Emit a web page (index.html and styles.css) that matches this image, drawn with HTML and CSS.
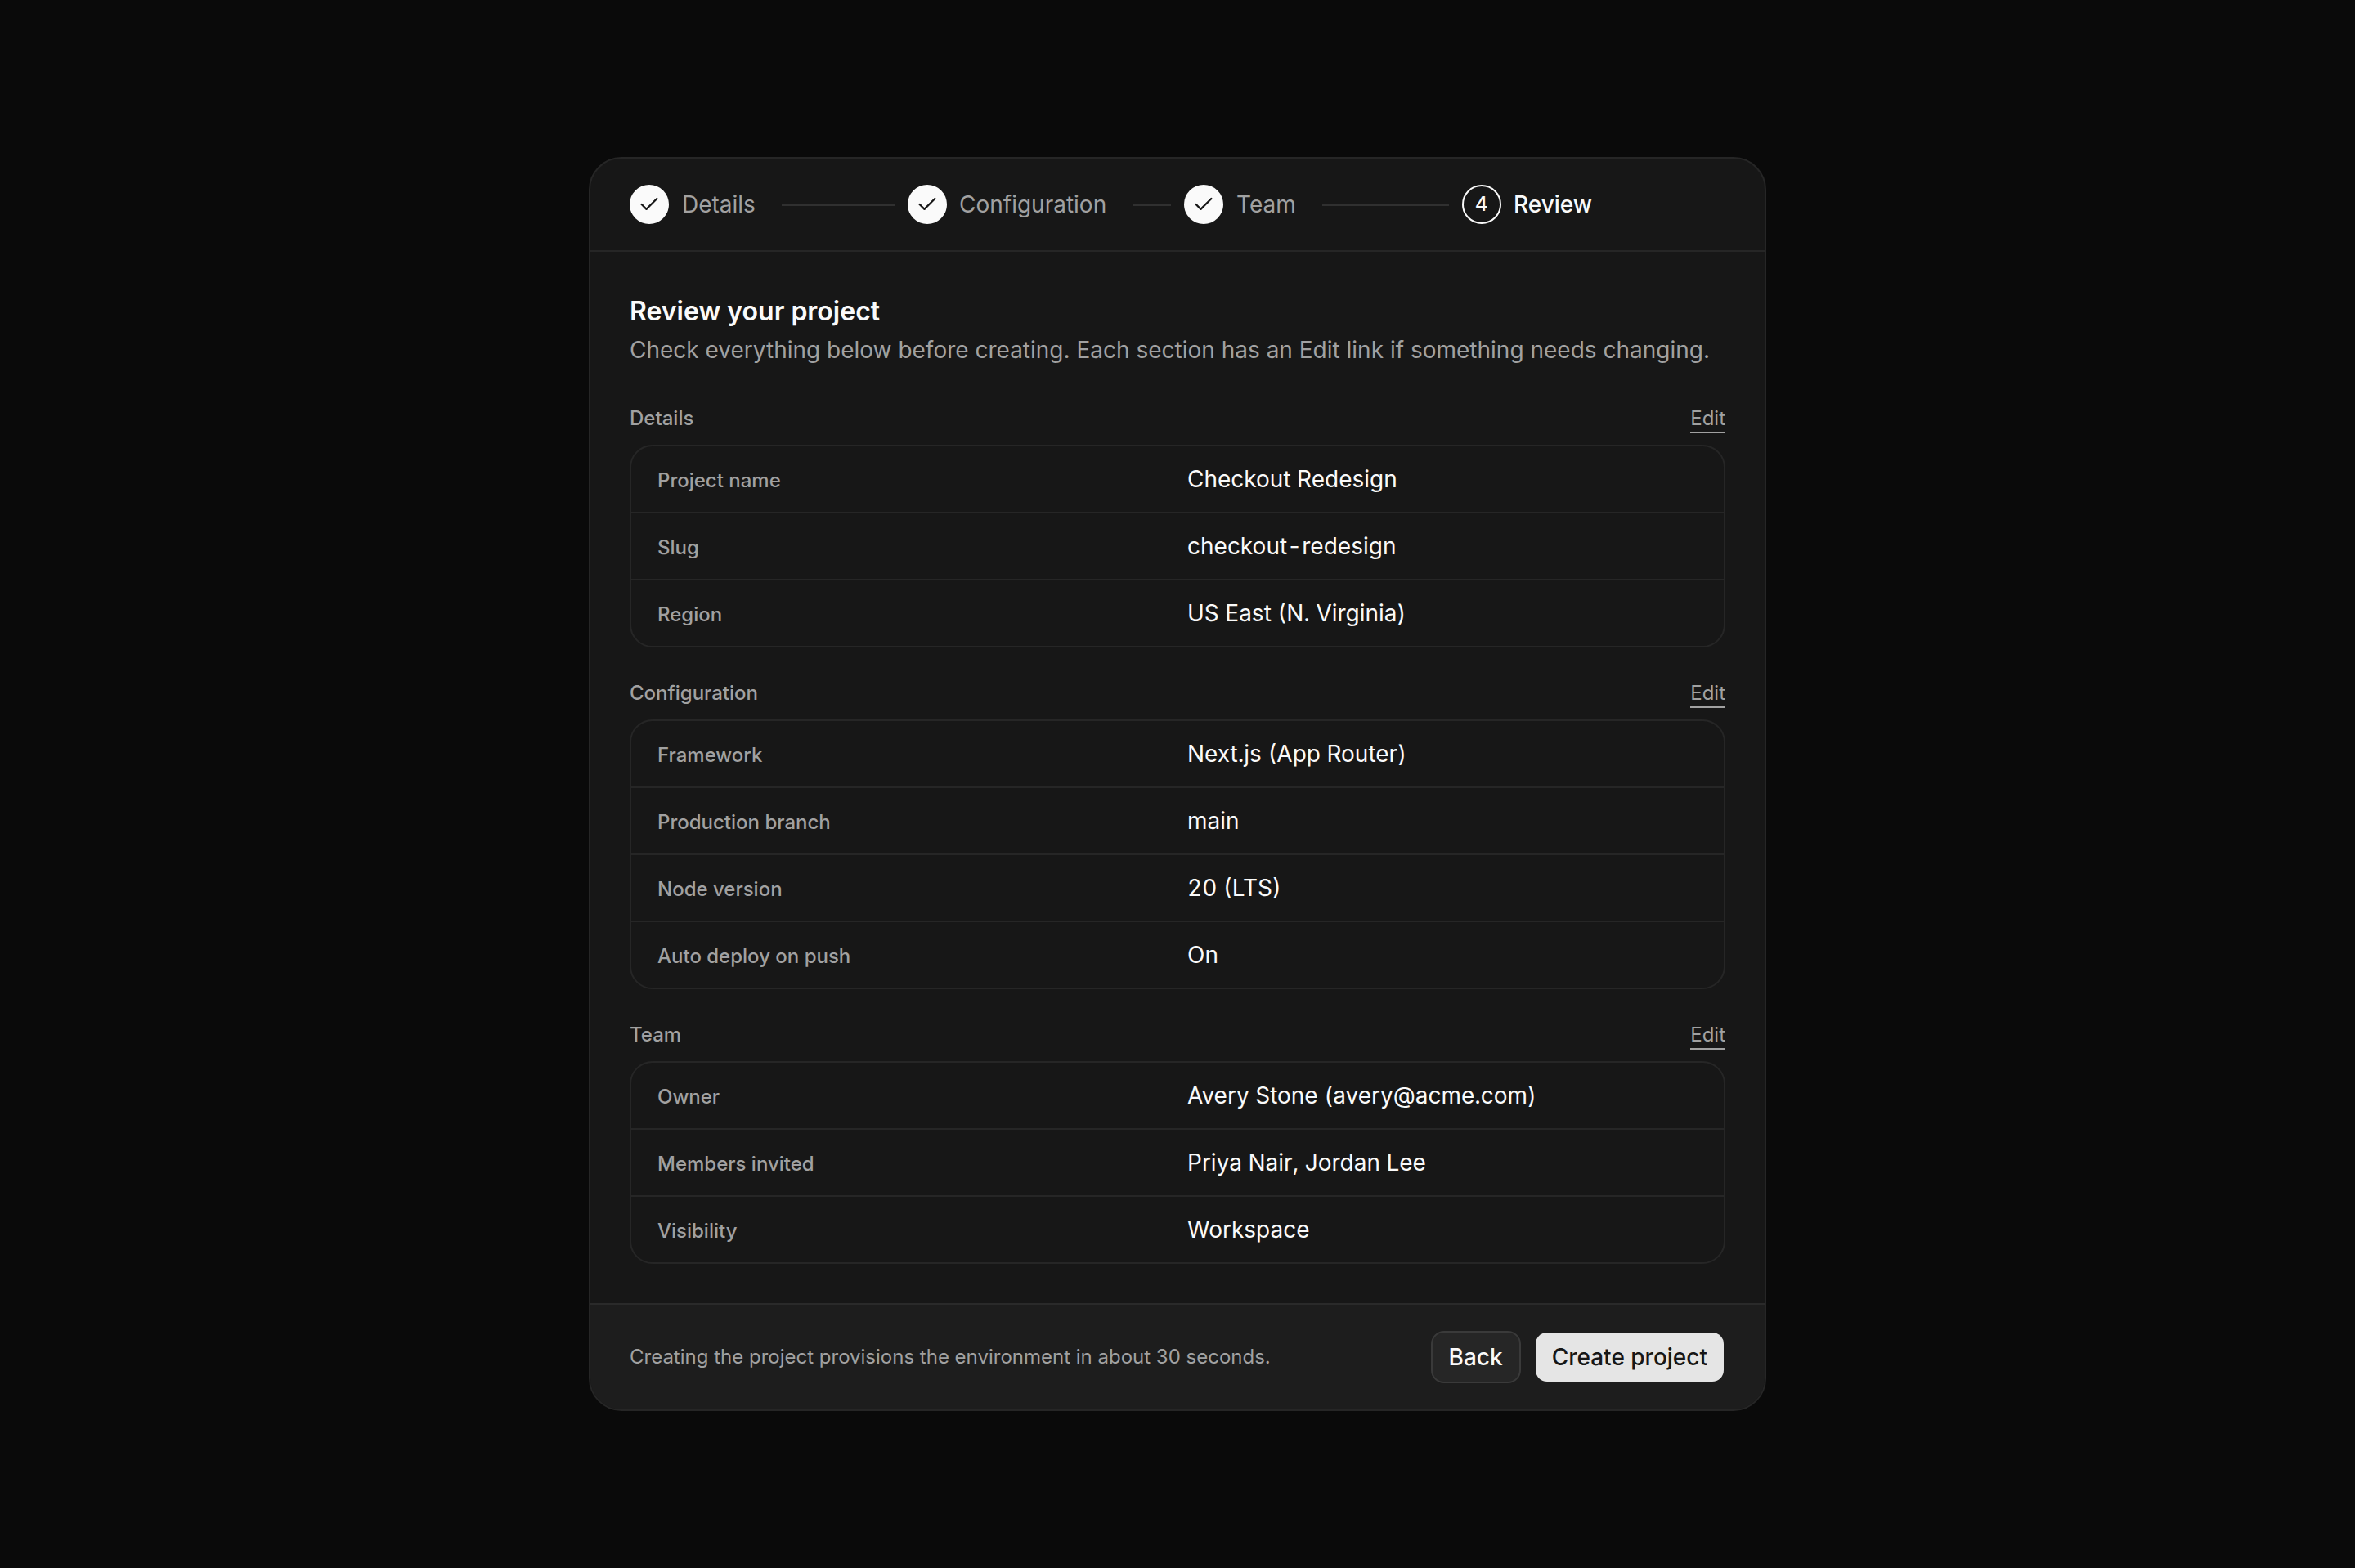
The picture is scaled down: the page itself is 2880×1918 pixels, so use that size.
FILE: index.html
```html
<!DOCTYPE html>
<html lang="en">
<head>
  <meta charset="UTF-8" />
  <title>New project | Review</title>
  <meta name="viewport" content="width=device-width, initial-scale=1" />
  <link rel="stylesheet" href="styles.css">
</head>
<body>
  <main class="wizard">
    <!-- Steps -->
    <ol class="steps">
      <li class="step">
        <span class="step-dot"><svg viewBox="0 0 24 24"><path d="M20 6 9 17l-5-5"/></svg></span>
        <span class="step-label">Details</span>
        <span class="step-line"></span>
      </li>
      <li class="step">
        <span class="step-dot"><svg viewBox="0 0 24 24"><path d="M20 6 9 17l-5-5"/></svg></span>
        <span class="step-label">Configuration</span>
        <span class="step-line"></span>
      </li>
      <li class="step">
        <span class="step-dot"><svg viewBox="0 0 24 24"><path d="M20 6 9 17l-5-5"/></svg></span>
        <span class="step-label">Team</span>
        <span class="step-line"></span>
      </li>
      <li class="step current">
        <span class="step-dot">4</span>
        <span class="step-label">Review</span>
      </li>
    </ol>

    <!-- Review -->
    <div class="content">
      <h1>Review your project</h1>
      <p class="intro">Check everything below before creating. Each section has an Edit link if something needs changing.</p>

      <section>
        <div class="section-head">
          <h2>Details</h2>
          <a href="#" class="edit">Edit</a>
        </div>
        <dl class="table">
          <div class="row"><dt>Project name</dt><dd>Checkout Redesign</dd></div>
          <div class="row"><dt>Slug</dt><dd>checkout-redesign</dd></div>
          <div class="row"><dt>Region</dt><dd>US East (N. Virginia)</dd></div>
        </dl>
      </section>

      <section>
        <div class="section-head">
          <h2>Configuration</h2>
          <a href="#" class="edit">Edit</a>
        </div>
        <dl class="table">
          <div class="row"><dt>Framework</dt><dd>Next.js (App Router)</dd></div>
          <div class="row"><dt>Production branch</dt><dd>main</dd></div>
          <div class="row"><dt>Node version</dt><dd>20 (LTS)</dd></div>
          <div class="row"><dt>Auto deploy on push</dt><dd>On</dd></div>
        </dl>
      </section>

      <section>
        <div class="section-head">
          <h2>Team</h2>
          <a href="#" class="edit">Edit</a>
        </div>
        <dl class="table">
          <div class="row"><dt>Owner</dt><dd>Avery Stone (avery@acme.com)</dd></div>
          <div class="row"><dt>Members invited</dt><dd>Priya Nair, Jordan Lee</dd></div>
          <div class="row"><dt>Visibility</dt><dd>Workspace</dd></div>
        </dl>
      </section>
    </div>

    <footer>
      <p class="note">Creating the project provisions the environment in about 30 seconds.</p>
      <button type="button" class="btn">Back</button>
      <button type="submit" class="btn btn-primary">Create project</button>
    </footer>
  </main>
</body>
</html>
```
FILE: styles.css
```css
* {
  box-sizing: border-box;
  margin: 0;
  padding: 0;
}
body {
  background: #0a0a0a;
  min-height: 100vh;
  display: flex;
  align-items: center;
  justify-content: center;
  font-family: Inter, Arial, sans-serif;
  font-size: 28px;
  line-height: 40px;
  color: #fafafa;
}
.wizard {
  width: 1440px;
  background: #171717;
  border: 2px solid #262626;
  border-radius: 40px;
  overflow: hidden;
}

/* steps */
.steps {
  display: grid;
  grid-template-columns: 324px 322px 324px 322px;
  gap: 16px;
  padding: 32px 48px;
  border-bottom: 2px solid #262626;
  list-style: none;
}
.step {
  display: flex;
  align-items: center;
  gap: 16px;
  color: #a1a1a1;
}
.step:nth-child(even) {
  gap: 15px;
}
.step-dot {
  width: 48px;
  height: 48px;
  flex: none;
  display: flex;
  align-items: center;
  justify-content: center;
  border-radius: 50%;
  background: #fafafa;
  color: #171717;
  font-size: 24px;
  font-weight: 500;
}
.step-dot svg {
  width: 28px;
  height: 28px;
  fill: none;
  stroke: currentColor;
  stroke-width: 2;
  stroke-linecap: round;
  stroke-linejoin: round;
}
.step-line {
  flex: 1;
  height: 2px;
  margin-top: 2px;
  margin-left: 16px;
  background: #303030;
}
.step:nth-child(even) .step-line {
  margin-left: 18px;
}
.step.current {
  color: #fafafa;
  font-weight: 500;
}
.step.current .step-dot {
  padding-right: 1px;
  background: none;
  border: 2px solid #fafafa;
  color: #fafafa;
}

/* content */
.content {
  padding: 48px;
}
h1 {
  padding-top: 1px;
  font-size: 32px;
  line-height: 48px;
  font-weight: 600;
}
.intro {
  margin-top: 3px;
  margin-bottom: 48px;
  color: #a1a1a1;
}
section + section {
  margin-top: 40px;
}
.section-head {
  display: flex;
  align-items: flex-start;
  justify-content: space-between;
  height: 32px;
  margin-bottom: 16px;
}
h2,
.edit,
dt,
.note {
  font-size: 24px;
  line-height: 32px;
  font-weight: 500;
  color: #a1a1a1;
}
.edit {
  font-weight: 400;
  text-decoration: none;
  border-bottom: 2px solid #a1a1a1;
}
.table {
  border: 2px solid #262626;
  border-radius: 28px;
}
.row {
  display: grid;
  grid-template-columns: 1fr 1fr;
  column-gap: 24px;
  align-items: baseline;
  padding: 20px 32px;
}
.row + .row {
  border-top: 2px solid #262626;
}
dd {
  font-variant-numeric: tabular-nums;
}

/* footer */
footer {
  display: flex;
  align-items: center;
  gap: 16px;
  padding: 32px 48px;
  background: #1d1d1d;
  border-top: 2px solid #2a2a2a;
}
.note {
  flex: 1;
  font-weight: 400;
}
.btn {
  height: 64px;
  padding: 0 20px;
  border: 2px solid #3a3a3a;
  border-radius: 16px;
  background: #262626;
  color: #fafafa;
  font: inherit;
  font-weight: 500;
}
.btn-primary {
  border-color: transparent;
  background: #e5e5e5;
  background-clip: padding-box;
  color: #171717;
}
```
